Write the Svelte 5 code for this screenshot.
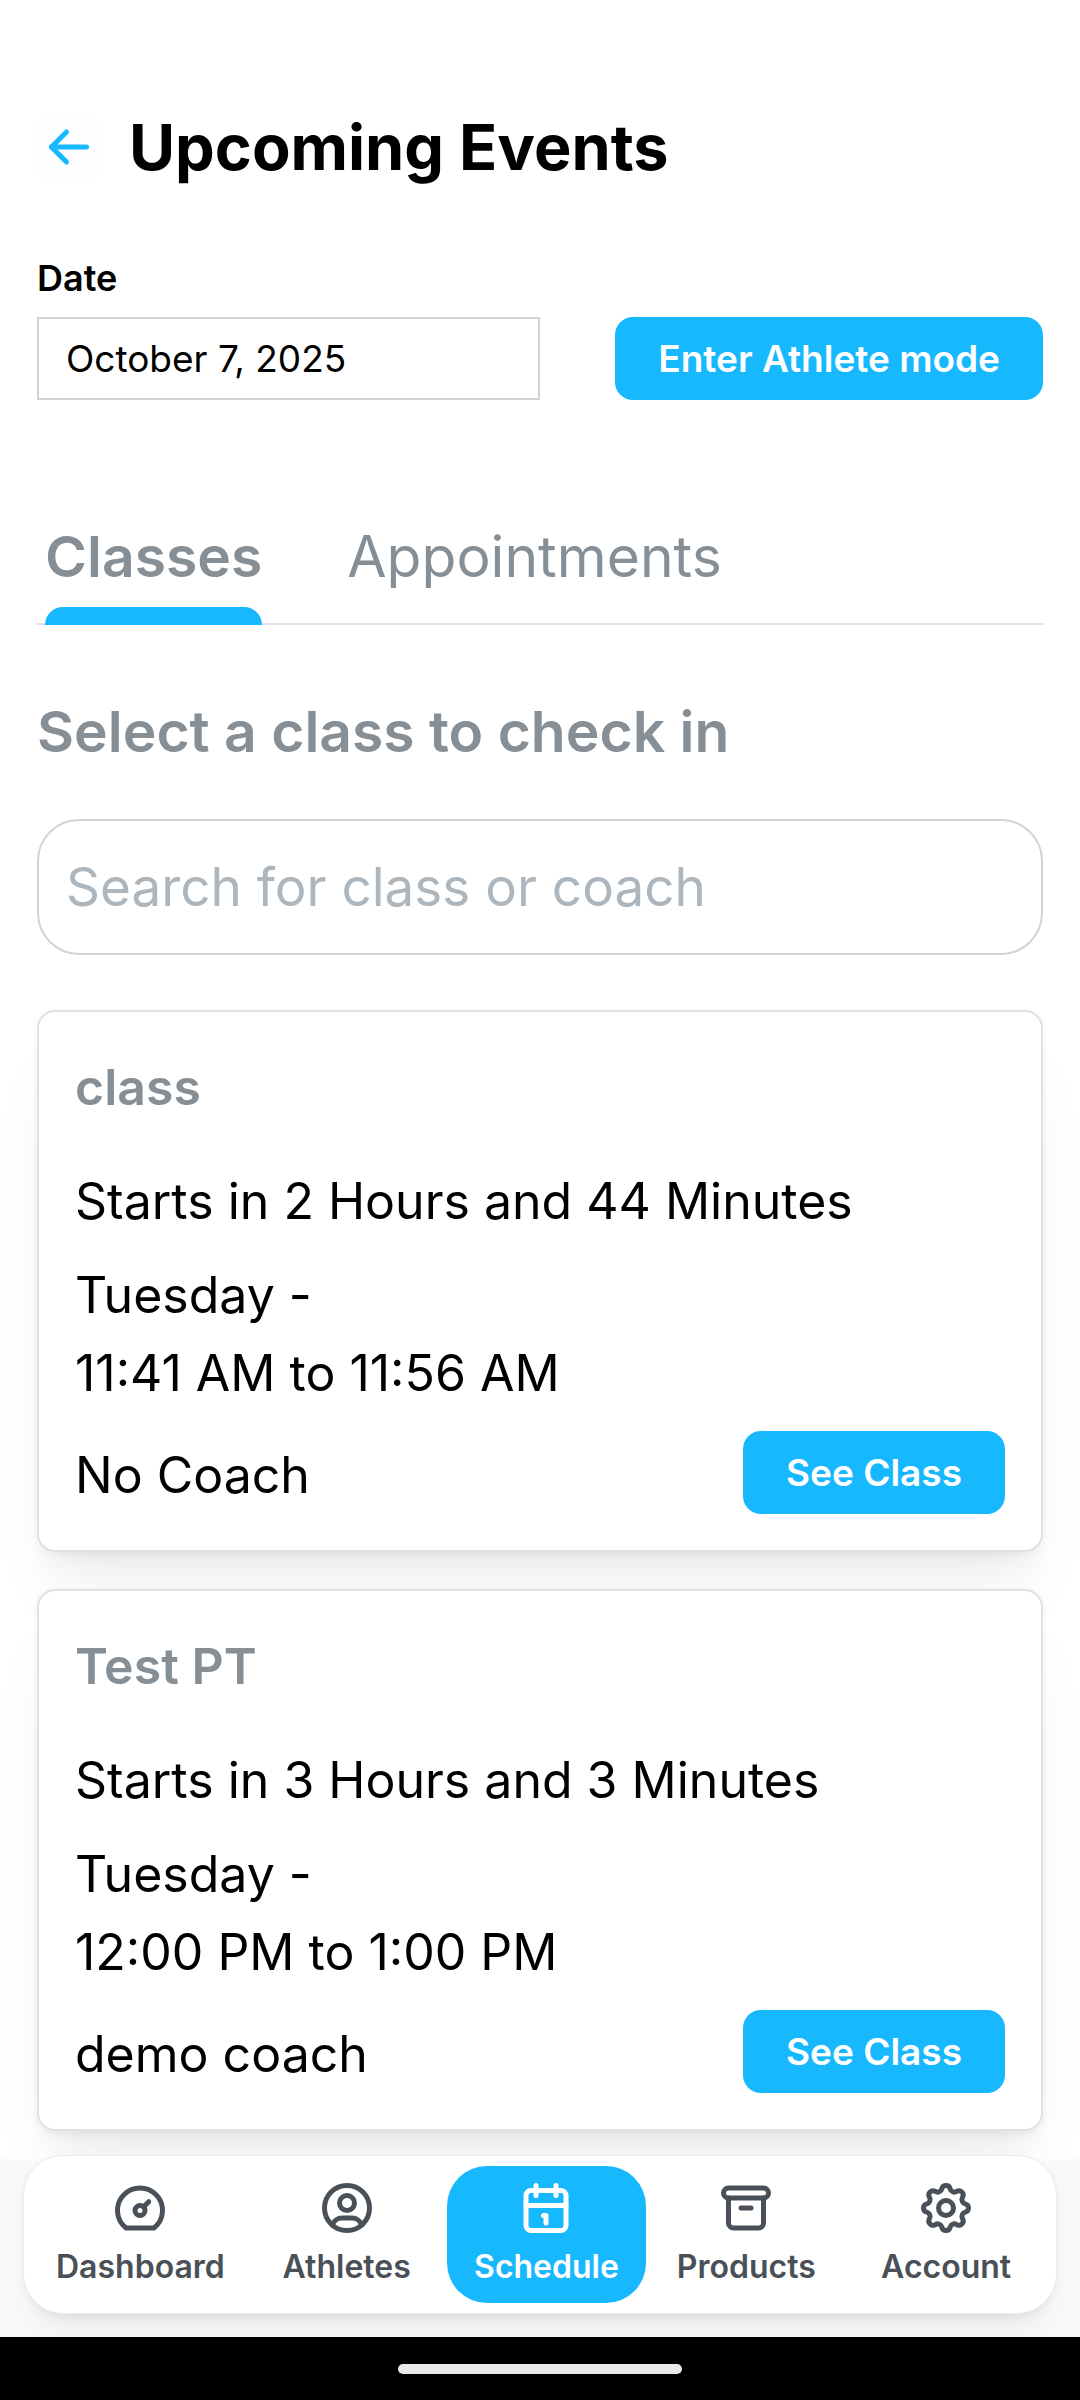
<script>
  let date = "October 7, 2025";
  let search = "";
  let activeTab = "Classes";

  const tabs = ["Classes", "Appointments"];

  const classes = [
    {
      name: "class",
      starts: "Starts in 2 Hours and 44 Minutes",
      day: "Tuesday -",
      time: "11:41 AM to 11:56 AM",
      coach: "No Coach"
    },
    {
      name: "Test PT",
      starts: "Starts in 3 Hours and 3 Minutes",
      day: "Tuesday -",
      time: "12:00 PM to 1:00 PM",
      coach: "demo coach"
    }
  ];

  const links = [
    {
      label: "Dashboard",
      paths: [
        "M10 13a2 2 0 1 0 4 0a2 2 0 1 0 -4 0",
        "M13.45 11.55l2.05 -2.05",
        "M6.4 20a9 9 0 1 1 11.2 0z"
      ]
    },
    {
      label: "Athletes",
      paths: [
        "M3 12a9 9 0 1 0 18 0a9 9 0 1 0 -18 0",
        "M9 10a3 3 0 1 0 6 0a3 3 0 1 0 -6 0",
        "M6.168 18.849a4 4 0 0 1 3.832 -2.849h4a4 4 0 0 1 3.834 2.855"
      ]
    },
    {
      label: "Schedule",
      active: true,
      paths: [
        "M4 7a2 2 0 0 1 2 -2h12a2 2 0 0 1 2 2v12a2 2 0 0 1 -2 2h-12a2 2 0 0 1 -2 -2z",
        "M16 3v4",
        "M8 3v4",
        "M4 11h16",
        "M11 15h1v3"
      ]
    },
    {
      label: "Products",
      paths: [
        "M3 6a2 2 0 0 1 2 -2h14a2 2 0 0 1 2 2a2 2 0 0 1 -2 2h-14a2 2 0 0 1 -2 -2z",
        "M5 8v10a2 2 0 0 0 2 2h10a2 2 0 0 0 2 -2v-10",
        "M10 12h4"
      ]
    },
    {
      label: "Account",
      paths: [
        "M10.325 4.317c.426 -1.756 2.924 -1.756 3.35 0a1.724 1.724 0 0 0 2.573 1.066c1.543 -.94 3.31 .826 2.37 2.37a1.724 1.724 0 0 0 1.065 2.572c1.756 .426 1.756 2.924 0 3.35a1.724 1.724 0 0 0 -1.066 2.573c.94 1.543 -.826 3.31 -2.37 2.37a1.724 1.724 0 0 0 -2.572 1.065c-.426 1.756 -2.924 1.756 -3.35 0a1.724 1.724 0 0 0 -2.573 -1.066c-1.543 .94 -3.31 -.826 -2.37 -2.37a1.724 1.724 0 0 0 -1.065 -2.572c-1.756 -.426 -1.756 -2.924 0 -3.35a1.724 1.724 0 0 0 1.066 -2.573c-.94 -1.543 .826 -3.31 2.37 -2.37c1 .608 2.296 .07 2.572 -1.065z",
        "M9 12a3 3 0 1 0 6 0a3 3 0 1 0 -6 0"
      ]
    }
  ];
</script>

<style>
  :global(body) {
    margin: 0;
    background: #fff;
  }

  .page {
    display: flex;
    flex-direction: column;
    min-height: 100vh;
    font-family: Inter, "Liberation Sans", sans-serif;
    color: #000;
  }

  .page :global(*) {
    box-sizing: border-box;
  }

  button,
  input {
    font-family: inherit;
    margin: 0;
  }

  svg {
    display: block;
    width: 60px;
    height: 60px;
    fill: none;
    stroke: currentColor;
    stroke-width: 2;
    stroke-linecap: round;
    stroke-linejoin: round;
  }

  main {
    flex: 1;
    display: flex;
    flex-direction: column;
    padding: 98px 37px 28px;
  }

  header {
    display: flex;
    align-items: center;
    gap: 28px;
  }

  .back {
    padding: 2px;
    border: none;
    border-radius: 10px;
    background: #fdfeff;
    color: #18b8ff;
    cursor: pointer;
  }

  h1 {
    margin: 0;
    font-size: 63px;
    line-height: 98px;
    font-weight: 700;
  }

  .toolbar {
    display: flex;
    justify-content: space-between;
    align-items: flex-end;
    margin-top: 54px;
  }

  .field {
    display: flex;
    flex-direction: column;
    gap: 10px;
    width: 50%;
  }

  label {
    font-size: 36px;
    line-height: 57px;
    font-weight: 600;
  }

  .field input {
    width: 100%;
    height: 83px;
    padding: 0 27px;
    border: 2px solid #ced4da;
    background: #fff;
    color: #000;
    font-size: 37px;
  }

  .primary {
    height: 83px;
    padding: 0 43px;
    border: none;
    border-radius: 18px;
    background: #18b8ff;
    color: #fff;
    font-size: 37px;
    font-weight: 600;
    white-space: nowrap;
    cursor: pointer;
  }

  .tabs {
    display: flex;
    gap: 85px;
    margin-top: 112px;
    padding-left: 8px;
    border-bottom: 2px solid #dee2e6;
  }

  .tab {
    position: relative;
    padding: 0 0 21px;
    border: none;
    background: none;
    color: #868e96;
    font-size: 57px;
    line-height: 90px;
    cursor: pointer;
  }

  .tab.active {
    font-weight: 600;
  }

  .tab.active::after {
    content: "";
    position: absolute;
    left: 0;
    right: 0;
    bottom: -2px;
    height: 18px;
    border-radius: 18px 18px 0 0;
    background: #18b8ff;
  }

  h2 {
    margin: 62px 0 0;
    color: #868e96;
    font-size: 57px;
    line-height: 90px;
    font-weight: 600;
  }

  .search {
    width: 100%;
    height: 136px;
    margin-top: 42px;
    padding: 0 27px;
    border: 2px solid #ced4da;
    border-radius: 42px;
    background: #fff;
    font-size: 53px;
  }

  .search::placeholder {
    color: #adb5bd;
    opacity: 1;
  }

  .list {
    display: flex;
    flex-direction: column;
    gap: 37px;
    margin-top: 55px;
  }

  .card {
    padding: 36px;
    border: 2px solid #dee2e6;
    border-radius: 18px;
    background: #fff;
    box-shadow:
      0 3px 8px rgba(0, 0, 0, 0.05),
      0 53px 66px -13px rgba(0, 0, 0, 0.05),
      0 26px 26px -13px rgba(0, 0, 0, 0.04);
    font-size: 50px;
    line-height: 78px;
  }

  .card h3 {
    margin: 0 0 36px;
    color: #868e96;
    font-size: 50px;
    font-weight: 600;
  }

  .card p {
    margin: 0;
  }

  .card .starts {
    margin-bottom: 16px;
  }

  .card-footer {
    display: flex;
    justify-content: space-between;
    align-items: flex-end;
    margin-top: 19px;
  }

  .dock {
    display: flex;
    padding: 0 23px 23px;
    background: #f8f9fb;
  }

  nav {
    flex: 1;
    display: flex;
    margin-top: -4px;
    padding: 10px;
    border: 1px solid #e9ecef;
    border-radius: 40px;
    background: #fff;
    box-shadow:
      0 3px 8px rgba(0, 0, 0, 0.05),
      0 26px 40px -13px rgba(0, 0, 0, 0.05),
      0 18px 18px -13px rgba(0, 0, 0, 0.04);
  }

  .link {
    flex: 1;
    display: flex;
    flex-direction: column;
    align-items: center;
    gap: 4px;
    padding: 12px 22px;
    border-radius: 40px;
    color: #495057;
    font-size: 32px;
    line-height: 49px;
    font-weight: 600;
    text-decoration: none;
  }

  .link.active {
    background: #18b8ff;
    color: #fff;
  }

  .system-bar {
    display: flex;
    justify-content: center;
    padding: 27px 0 26px;
    background: #000;
  }

  .handle {
    width: 284px;
    height: 10px;
    border-radius: 5px;
    background: #eaeaea;
  }
</style>

<div class="page">
  <main>
    <header>
      <button class="back" aria-label="Back">
        <svg viewBox="0 0 24 24">
          <path d="M5 12h14" />
          <path d="M5 12l6 6" />
          <path d="M5 12l6 -6" />
        </svg>
      </button>
      <h1>Upcoming Events</h1>
    </header>

    <div class="toolbar">
      <div class="field">
        <label for="date">Date</label>
        <input id="date" type="text" bind:value={date} />
      </div>
      <button class="primary">Enter Athlete mode</button>
    </div>

    <div class="tabs" role="tablist">
      {#each tabs as tab}
        <button
          class="tab"
          class:active={tab === activeTab}
          role="tab"
          aria-selected={tab === activeTab}
          on:click={() => (activeTab = tab)}>{tab}</button>
      {/each}
    </div>

    <h2>Select a class to check in</h2>
    <input
      class="search"
      type="text"
      aria-label="Search for class or coach"
      placeholder="Search for class or coach"
      bind:value={search} />

    <div class="list">
      {#each classes as item}
        <article class="card">
          <h3>{item.name}</h3>
          <p class="starts">{item.starts}</p>
          <p>{item.day}</p>
          <p>{item.time}</p>
          <div class="card-footer">
            <p>{item.coach}</p>
            <button class="primary">See Class</button>
          </div>
        </article>
      {/each}
    </div>
  </main>

  <div class="dock">
    <nav>
      {#each links as link}
        <a
          class="link"
          class:active={link.active}
          aria-current={link.active ? "page" : undefined}
          href="#{link.label.toLowerCase()}">
          <svg viewBox="0 0 24 24" aria-hidden="true">
            {#each link.paths as d}
              <path {d} />
            {/each}
          </svg>
          <span>{link.label}</span>
        </a>
      {/each}
    </nav>
  </div>
  <div class="system-bar">
    <div class="handle"></div>
  </div>
</div>
